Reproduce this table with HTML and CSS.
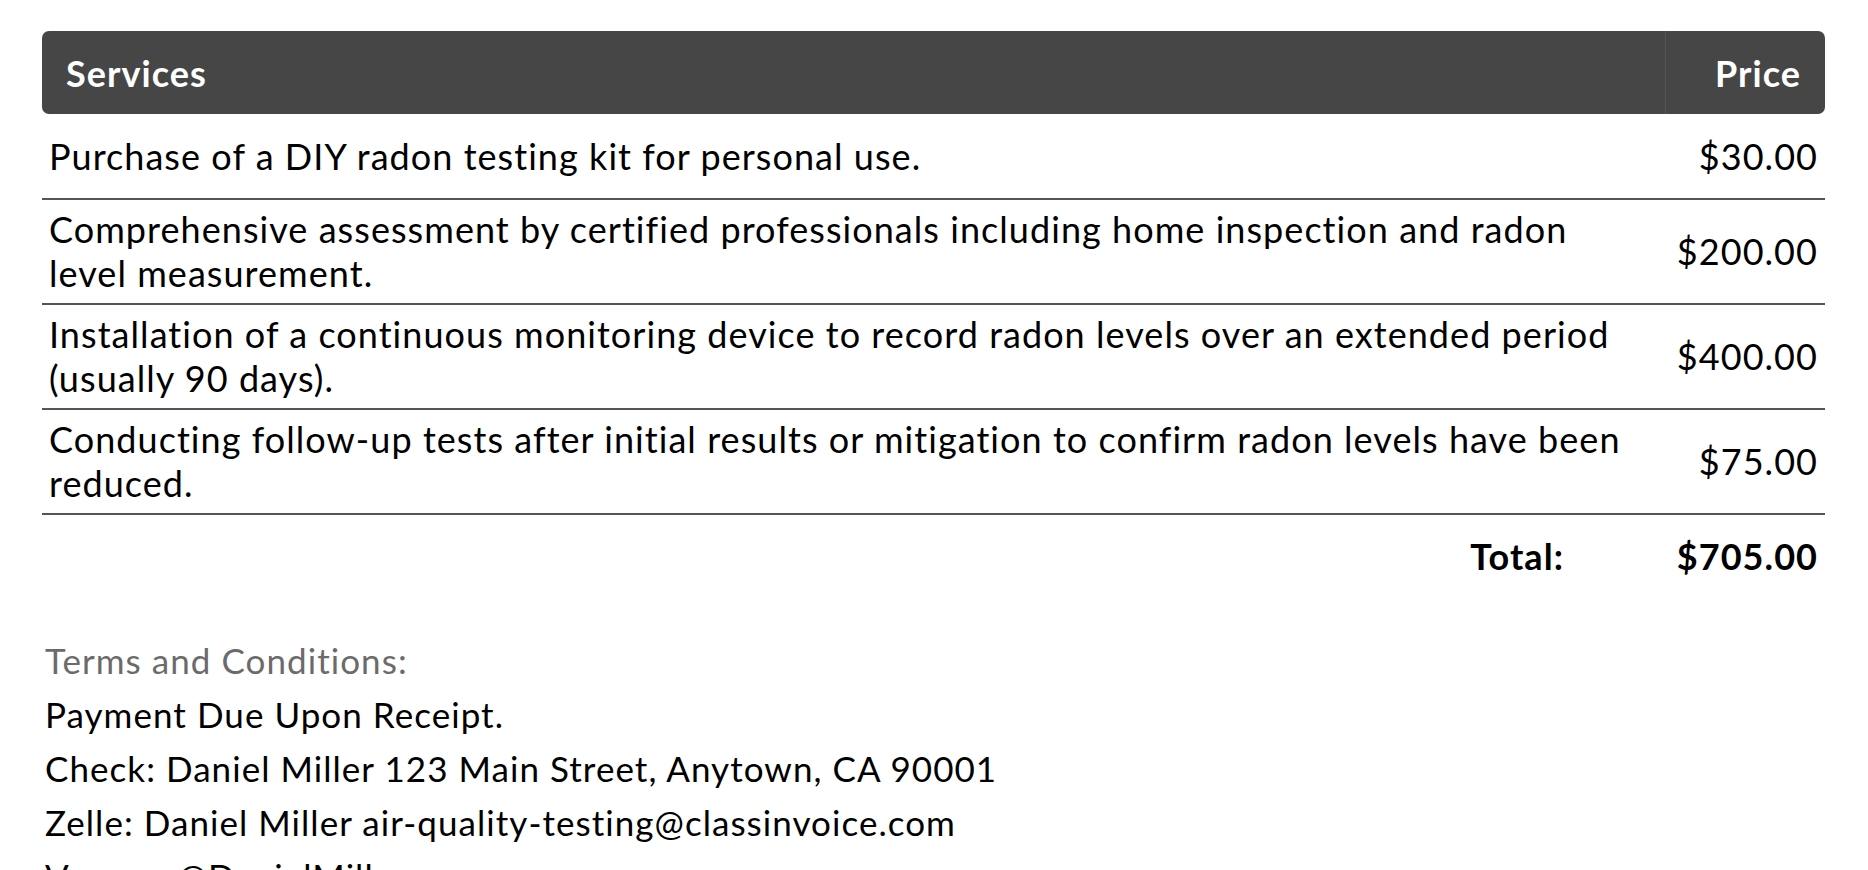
FILE: index.html
```html
<!DOCTYPE html>
<html>
<head>
<meta charset="utf-8">
<link rel="stylesheet" href="styles.css">
</head>
<body>
<div class="page">
  <table class="items">
    <thead>
      <tr>
        <th class="svc-h">Services</th>
        <th class="price-h">Price</th>
      </tr>
    </thead>
    <tbody>
      <tr class="row-single">
        <td class="svc">Purchase of a DIY radon testing kit for personal use.</td>
        <td class="price">$30.00</td>
      </tr>
      <tr>
        <td class="svc">Comprehensive assessment by certified professionals including home inspection and radon level measurement.</td>
        <td class="price">$200.00</td>
      </tr>
      <tr>
        <td class="svc">Installation of a continuous monitoring device to record radon levels over an extended period (usually 90 days).</td>
        <td class="price">$400.00</td>
      </tr>
      <tr>
        <td class="svc">Conducting follow-up tests after initial results or mitigation to confirm radon levels have been reduced.</td>
        <td class="price">$75.00</td>
      </tr>
    </tbody>
  </table>
  <div class="total">
    <span class="total-label">Total:</span>
    <span class="total-amount">$705.00</span>
  </div>
  <div class="terms">
    <div class="terms-title">Terms and Conditions:</div>
    <div class="terms-line">Payment Due Upon Receipt.</div>
    <div class="terms-line">Check: Daniel Miller 123 Main Street, Anytown, CA 90001</div>
    <div class="terms-line">Zelle: Daniel Miller air-quality-testing@classinvoice.com</div>
    <div class="terms-line">Venmo: @DanielMiller</div>
  </div>
</div>
</body>
</html>
```

FILE: styles.css
```css
html, body {
  margin: 0;
  padding: 0;
  background: #ffffff;
}
body {
  font-family: "Lato", "Noto Sans", sans-serif;
  color: #000;
  letter-spacing: 1.05px;
}
.page {
  padding: 31px 43px 0 42px;
}
.items {
  width: 100%;
  border-collapse: separate;
  border-spacing: 0;
  font-size: 36px;
}
.items th {
  background: #464646;
  color: #fff;
  font-weight: 700;
  height: 83px;
  padding: 0 24px;
  font-size: 36px;
  box-sizing: border-box;
}
.svc-h {
  text-align: left;
  border-radius: 7px 0 0 7px;
}
.price-h {
  text-align: right;
  width: 160px;
  box-sizing: border-box;
  border-radius: 0 7px 7px 0;
  border-left: 1px solid #555;
}
.items td {
  border-bottom: 2px solid #555;
  line-height: 44px;
  padding: 7px 7px 8px 7px;
  vertical-align: middle;
  height: 88px;
  box-sizing: content-box;
}
.row-single td {
  height: 69px;
}
.items td.svc {
  text-align: left;
  padding-right: 32px;
}
.price {
  text-align: right;
  white-space: nowrap;
}
.total {
  display: flex;
  justify-content: flex-end;
  align-items: center;
  height: 82px;
  font-size: 36px;
  font-weight: 700;
}
.total-label {
  margin-right: 101px;
}
.total-amount {
  width: 160px;
  box-sizing: border-box;
  text-align: right;
  padding-right: 7px;
}
.terms {
  margin-top: 36px;
  padding-left: 3px;
  font-size: 35px;
  line-height: 54px;
}
.terms-title {
  color: #6b6b6b;
}
```
